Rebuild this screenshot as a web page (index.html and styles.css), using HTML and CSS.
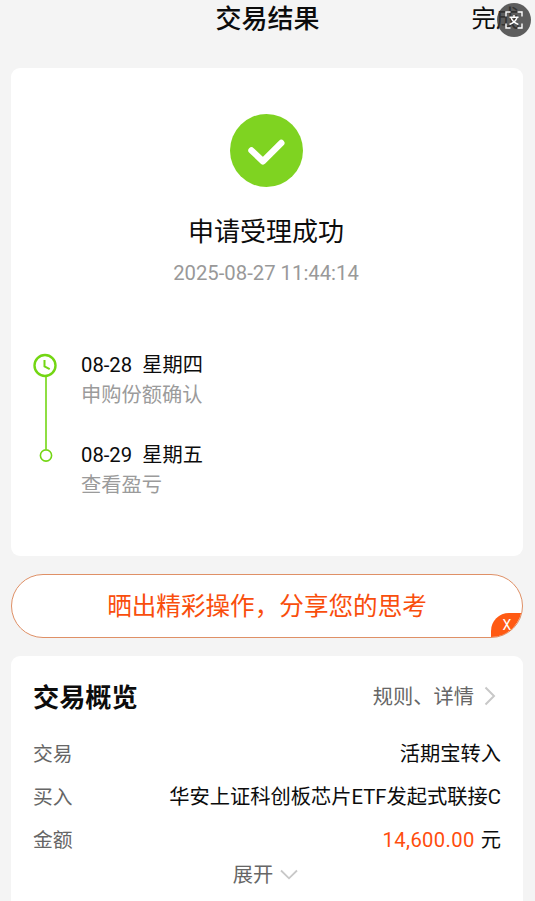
FILE: index.html
```html
<!DOCTYPE html>
<html lang="zh-CN">
<head>
<meta charset="utf-8">
<title>交易结果</title>
<link rel="stylesheet" href="styles.css">
</head>
<body>
<header class="topbar">
  <h1 class="topbar-title">交易结果</h1>
  <span class="topbar-done">完成</span>
  <svg class="translate" viewBox="0 0 34 34">
    <circle cx="17" cy="17" r="17" fill="#3c3c3c" fill-opacity=".82"/>
    <g fill="none" stroke="#fff" stroke-width="1.4">
      <path d="M9 13.500V9h4.500M20.500 9H25v4.500M25 20.500V25h-4.500M13.500 25H9v-4.500"/>
      <path d="M12.500 14.200h9M17 12v2.200M14 14.500c1 3.500 3.500 5.500 7.500 7M20 14.500c-1 3.500-3.500 5.500-7.500 7"/>
    </g>
  </svg>
</header>
<main>
  <section class="card result">
    <svg class="success" viewBox="0 0 73 73">
      <circle cx="36.500" cy="36.500" r="36.500" fill="#7fd321"/>
      <path d="M21.500 36.500 33 47.300 51.300 29" fill="none" stroke="#fff" stroke-width="6.400" stroke-linecap="round" stroke-linejoin="round"/>
    </svg>
    <h2 class="result-title">申请受理成功</h2>
    <p class="result-time">2025-08-27 11:44:14</p>
    <div class="timeline">
      <svg class="track" viewBox="0 0 24 112">
        <g fill="none" stroke="#73d613">
          <circle cx="12" cy="12.500" r="10.500" stroke-width="2.400"/>
          <path d="M11.500 7v6.300l5.200 2.800" stroke-width="2"/>
          <path d="M13 23v73" stroke-width="1.600"/>
          <circle cx="13" cy="102.500" r="5.600" stroke-width="1.600"/>
        </g>
      </svg>
      <ol class="steps">
        <li><p class="step-date">08-28<span class="weekday">星期四</span></p><p class="step-text">申购份额确认</p></li>
        <li><p class="step-date">08-29<span class="weekday">星期五</span></p><p class="step-text">查看盈亏</p></li>
      </ol>
    </div>
  </section>
  <section class="share">
    <span>晒出精彩操作，分享您的思考</span>
    <span class="share-close">X</span>
  </section>
  <section class="card overview">
    <div class="overview-head">
      <h2 class="overview-title">交易概览</h2>
      <span class="rules">规则、详情<svg class="chevron" viewBox="0 0 12 20"><path d="M1.500 1.500 10 10 1.500 18.500" fill="none" stroke="#c8c8c8" stroke-width="2"/></svg></span>
    </div>
    <dl class="rows">
      <div class="row"><dt>交易</dt><dd>活期宝转入</dd></div>
      <div class="row"><dt>买入</dt><dd>华安上证科创板芯片ETF发起式联接C</dd></div>
      <div class="row"><dt>金额</dt><dd><span class="amount">14,600.00</span>元</dd></div>
    </dl>
    <div class="expand">展开<svg class="chevron-down" viewBox="0 0 18 11"><path d="M1 1.500 9 9.300 17 1.500" fill="none" stroke="#c8c8c8" stroke-width="1.800"/></svg></div>
  </section>
</main>
</body>
</html>
```

FILE: styles.css
```css
* { box-sizing: border-box; margin: 0; padding: 0; }
body {
  height: 901px;
  overflow: hidden;
  background: #f4f4f4;
  color: #0c0c0c;
  font-family: Roboto, "Noto Sans CJK SC", sans-serif;
  font-size: 20.25px;
}
.topbar {
  position: relative;
  display: flex;
  justify-content: center;
  height: 67.7px;
}
.topbar-title { font-size: 26px; font-weight: 500; line-height: 38px; }
.topbar-done { position: absolute; right: 15px; top: 0; font-size: 24.3px; line-height: 38px; }
.translate { position: absolute; left: 497px; top: 3px; width: 34px; height: 34px; }
main { display: flex; flex-direction: column; gap: 18px; padding: 0 12px 0 11px; }
.card { background: #fff; border-radius: 9px; }
.result { display: flex; flex-direction: column; align-items: center; height: 488px; padding: 46px 2px 0 0; }
.success { width: 73px; height: 73px; flex: none; }
.result-title { margin-top: 26px; font-size: 26px; font-weight: 400; line-height: 38px; }
.result-time { margin-top: 7px; color: #999; font-size: 20.3px; line-height: 30px; }
.timeline { display: flex; align-self: stretch; gap: 24px; margin-top: 62px; padding-left: 22px; }
.track { width: 24px; height: 112px; margin-top: 3px; }
.steps { display: flex; flex-direction: column; gap: 30px; list-style: none; }
.step-date, .step-text { line-height: 30px; }
.weekday { margin-left: 10px; }
.step-text { color: #9b9b9b; }
.share {
  position: relative;
  display: flex;
  align-items: center;
  justify-content: center;
  height: 64px;
  padding-bottom: 4px;
  border: 1px solid #df9066;
  border-radius: 32px;
  overflow: hidden;
  background: #fff;
  color: #f94e0c;
  font-size: 24.6px;
}
.share-close {
  position: absolute;
  right: -1px;
  bottom: -1px;
  width: 32px;
  height: 25px;
  border-top-left-radius: 18px;
  background: #ff5a13;
  color: #fff;
  font-size: 14px;
  line-height: 25px;
  text-align: center;
}
.overview { height: 260px; padding: 21px 22px 0; }
.overview-head { display: flex; align-items: center; justify-content: space-between; height: 40px; }
.overview-title { padding-bottom: 2px; font-size: 26.2px; font-weight: 700; }
.rules { display: flex; align-items: center; gap: 10px; padding: 0 5px 2px 0; color: #666; }
.chevron { width: 12px; height: 20px; }
.rows { padding-top: 16px; }
.row { display: flex; justify-content: space-between; height: 43.3px; line-height: 43.3px; white-space: nowrap; }
.row dt { color: #666; font-size: 19.8px; }
.amount { margin-right: 6px; color: #ff4d0d; letter-spacing: .35px; }
.expand { display: flex; align-items: center; justify-content: center; gap: 7px; padding-right: 3px; line-height: 24px; color: #666; }
.chevron-down { width: 18px; height: 11px; }
```
